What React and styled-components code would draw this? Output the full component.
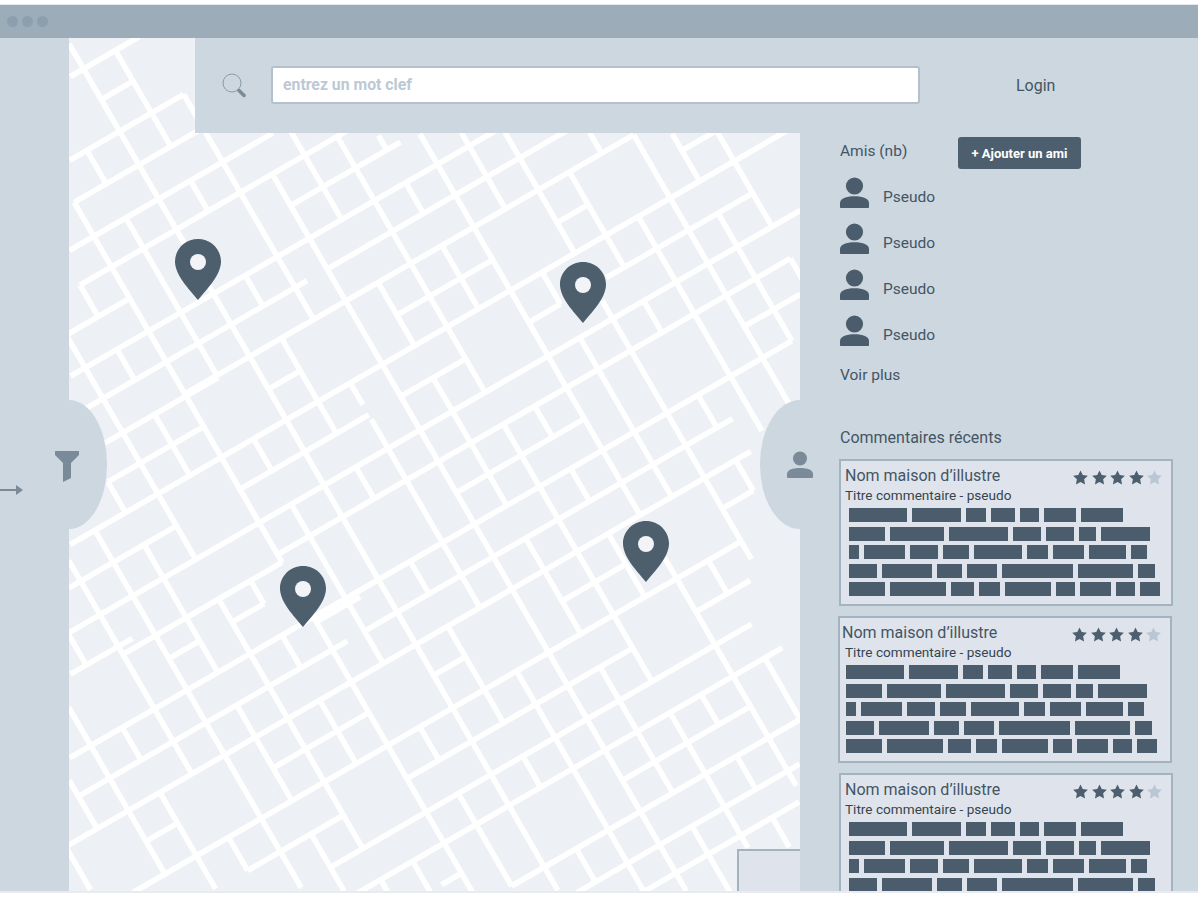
import styled, { createGlobalStyle } from "styled-components";

const GlobalStyle = createGlobalStyle`
  html, body {
    margin: 0;
    background: #fff;
    font-family: Roboto, "Liberation Sans", sans-serif;
    overflow: hidden;
  }
`;

const slate = "#4b5d6c";
const ink = "#445564";
const muted = "#7a8a99";
const panel = "#cdd7e0";
const cardBg = "#dfe4ec";
const cardLine = "#a3b3c0";

// streets traced from 3x crops: each group has the crop origin, then x1,y1,x2,y2 runs
const STREETS = [
  { x: 0, y: 0, s: [
    [208,225,420,115],[305,298,388,250],[208,480,585,265],[225,605,590,395],[208,750,820,400],[208,870,1200,305],
    [620,890,1200,565],[875,612,1200,425],[945,720,1110,625],[980,795,1200,665],[1040,880,1200,790],
    [210,130,649,897],[345,160,520,430],[265,465,320,540],[555,300,900,880],[865,400,1030,650],[810,530,1040,900],
    [1010,420,1200,750],[1130,410,1150,440],[570,540,620,620],[375,650,430,730],[430,750,530,900],[208,590,410,940],[230,870,250,900],
  ]},
  { x: 60, y: 280, s: [
    [30,165,205,60],[30,285,520,0],[130,355,740,0],[340,355,980,0],[780,355,1200,115],[625,325,715,275],[1010,100,1200,0],[1030,350,1200,250],
    [30,170,130,350],[60,25,110,100],[175,0,370,330],[170,215,220,295],[300,0,470,280],[460,50,650,380],[555,0,610,70],
    [690,0,760,110],[815,0,1030,350],[665,190,780,360],[955,20,1060,195],[1070,0,1200,180],[1120,310,1160,360],[870,320,890,360],
  ]},
  { x: 0, y: 380, s: [
    [255,80,400,5],[315,190,640,0],[335,300,600,145],[208,490,1080,-10],[208,625,510,440],[730,325,1080,120],[208,760,1080,255],
    [400,810,850,540],[835,505,1080,370],[760,810,1080,625],[960,720,1080,650],[700,710,800,655],
    [270,0,585,525],[208,540,355,790],[265,420,520,810],[340,305,380,385],[460,105,570,280],[525,0,860,570],[765,190,820,260],
    [790,0,1080,490],[435,510,600,800],[640,640,750,810],[740,590,795,655],[875,380,1080,740],[905,0,1005,145],[1040,30,1080,80],[950,710,1000,810],
  ]},
  { x: 60, y: 640, s: [
    [30,100,220,0],[30,355,650,0],[330,55,420,0],[50,470,860,0],[30,620,1090,10],[650,380,900,225],[415,630,1200,190],[1130,95,1200,55],
    [215,750,400,650],[425,655,495,610],[520,595,600,550],[575,690,835,525],[825,690,1200,450],[880,750,1200,570],[1055,410,1200,320],[270,600,350,555],[815,655,890,615],
    [30,0,70,60],[170,30,395,385],[285,0,720,745],[420,10,475,95],[570,60,905,605],[665,0,720,75],[820,40,1200,680],[920,0,970,65],
    [1060,20,1200,260],[775,185,890,360],[185,270,245,350],[530,200,700,475],[30,200,320,720],[30,420,105,560],[300,465,470,745],
    [500,600,560,690],[750,585,860,750],[1080,275,1140,345],[30,640,90,750],[960,720,990,750],[1070,670,1120,750],
  ]},
  { x: 400, y: 130, s: [
    [0,155,280,10],[0,295,510,10],[0,425,730,0],[0,555,265,395],[0,685,800,205],[800,205,1180,10],[620,445,1050,195],[470,270,555,225],[860,55,950,10],
    [395,580,470,530],[640,555,1200,240],[60,900,620,580],[255,905,1200,375],[5,790,180,690],[805,835,1200,610],[710,895,810,830],[985,735,1090,680],[1040,600,1200,490],
    [55,15,580,900],[180,10,315,235],[310,10,525,360],[510,140,680,405],[20,170,70,240],[130,360,235,530],[0,340,250,775],[700,20,1170,820],[715,280,1090,900],
    [820,10,900,145],[950,10,1115,275],[965,260,1170,630],[1015,365,1110,530],[830,475,880,560],[790,365,880,530],[475,275,530,360],[565,10,605,60],[425,440,480,530],
    [610,510,810,850],[535,630,710,900],[395,835,450,900],[725,520,790,590],[100,760,160,830],[0,800,55,890],[890,810,940,880],[1005,760,1060,830],[1170,400,1200,450],[0,590,40,640],
  ]},
  { x: 350, y: 420, s: [
    [0,150,270,0],[0,285,500,0],[0,525,940,0],[325,215,700,0],[40,635,1150,0],[100,720,1200,90],[640,545,820,440],[600,700,1200,365],
    [1040,570,1200,480],[1100,655,1200,605],[1125,260,1200,215],[760,720,830,680],
    [60,0,385,550],[190,0,600,700],[315,0,470,245],[460,25,880,720],[570,0,600,40],[700,0,870,280],[830,0,970,215],[955,0,1200,420],
    [665,165,715,235],[20,150,65,225],[530,370,695,630],[0,320,230,720],[180,440,235,510],[780,350,885,515],[945,410,1110,720],
    [345,480,390,560],[0,560,100,720],[140,590,200,680],[295,630,350,720],[1080,430,1130,510],[730,510,790,575],[1160,130,1200,200],
  ]},
  { x: 440, y: 650, s: [
    [0,75,60,35],[0,190,340,0],[0,330,570,10],[190,205,270,160],[0,460,810,0],[20,575,1030,0],[555,390,920,175],[220,700,1080,210],[410,725,1080,345],
    [610,720,1080,460],[0,695,60,665],[1000,280,1080,220],
    [60,0,190,205],[0,95,40,170],[40,190,355,720],[235,80,620,720],[330,20,740,720],[480,60,700,420],[580,0,630,75],[825,0,1050,350],[690,200,930,590],
    [975,30,1080,210],[785,140,835,215],[245,320,300,395],[50,430,110,510],[15,580,110,720],[105,535,220,700],[410,615,465,690],[750,535,810,610],[820,630,880,720],
    [670,590,745,720],[895,330,950,410],[1000,520,1050,590],[1060,370,1080,400],
  ]},
];

// the street grid is turned by 30deg: put every trace on its axis, join the ones that are the same street
const COS = Math.cos(Math.PI / 6);
const SIN = 0.5;
const toU = (x, y) => x * COS - y * SIN;
const toV = (x, y) => x * SIN + y * COS;

function cluster(segs) {
  const sorted = [...segs].sort((p, q) => p.c - q.c);
  const groups = [];
  sorted.forEach((seg) => {
    const last = groups[groups.length - 1];
    if (last && seg.c - last[0].c < 8) last.push(seg);
    else groups.push([seg]);
  });
  return groups.flatMap((group) => {
    const total = group.reduce((n, g) => n + (g.b - g.a), 0);
    const c = group.reduce((n, g) => n + g.c * (g.b - g.a), 0) / total;
    const runs = [];
    [...group].sort((p, q) => p.a - q.a).forEach((g) => {
      const run = runs[runs.length - 1];
      if (run && g.a - run.b < 10) run.b = Math.max(run.b, g.b);
      else runs.push({ c, a: g.a, b: g.b });
    });
    return runs;
  });
}

function snapEnds(segs, cross) {
  const nearest = (seg, end) => {
    let best = end;
    let gap = 13;
    cross.forEach((o) => {
      if (seg.c < o.a - 8 || seg.c > o.b + 8) return;
      const d = Math.abs(o.c - end);
      if (d < gap) {
        gap = d;
        best = o.c;
      }
    });
    return best;
  };
  return segs.map((seg) => ({ ...seg, a: nearest(seg, seg.a), b: nearest(seg, seg.b) }));
}

function buildStreets() {
  const ne = [];
  const se = [];
  STREETS.forEach((tile) => tile.s.forEach(([a, b, c, d]) => {
    const x1 = tile.x + a / 3;
    const y1 = tile.y + b / 3;
    const x2 = tile.x + c / 3;
    const y2 = tile.y + d / 3;
    const u = [toU(x1, y1), toU(x2, y2)];
    const v = [toV(x1, y1), toV(x2, y2)];
    if ((x2 - x1) * (y2 - y1) < 0) {
      ne.push({ c: (v[0] + v[1]) / 2, a: Math.min(...u), b: Math.max(...u) });
    } else {
      se.push({ c: (u[0] + u[1]) / 2, a: Math.min(...v), b: Math.max(...v) });
    }
  }));
  const across = cluster(ne);
  const down = cluster(se);
  return { across: snapEnds(across, down), down: snapEnds(down, across) };
}

const GRID = buildStreets();

const PINS = [
  { id: "a", x: 198, y: 239 },
  { id: "b", x: 583, y: 262 },
  { id: "c", x: 646, y: 521 },
  { id: "d", x: 303, y: 566 },
];

const COMMENT_ROWS = [
  [58, 49, 20, 24, 19, 32, 42],
  [36, 54, 59, 28, 28, 17, 49],
  [10, 41, 28, 26, 48, 21, 31, 37, 16],
  [28, 50, 25, 30, 71, 55, 17],
  [36, 56, 23, 21, 46, 19, 31, 19, 20],
];

const Page = styled.div`
  height: 900px;
  padding-top: 4px;
  box-sizing: border-box;
`;

const Browser = styled.div`
  width: 1198px;
  height: 889px;
  border-top: 1px solid #e4e8ec;
  border-bottom: 2px solid #e8ecf0;
  box-sizing: border-box;
  display: flex;
  flex-direction: column;
  overflow: hidden;
`;

const TitleBar = styled.div`
  height: 33px;
  flex: none;
  background: #9cacb9;
  display: flex;
  align-items: center;
  gap: 4px;
  padding: 0 0 0 7px;
`;

const Dot = styled.span`
  width: 11px;
  height: 11px;
  border-radius: 50%;
  background: #8d9eae;
`;

const Body = styled.div`
  position: relative;
  flex: 1;
  min-height: 0;
  display: grid;
  grid-template-columns: 69px 126px 605px 398px;
  grid-template-rows: 95px 1fr;
  background: ${panel};
`;

const Rail = styled.aside`
  grid-column: 1;
  grid-row: 1 / 3;
  background: ${panel};
  position: relative;
  z-index: 2;
`;

const RailArrow = styled.svg`
  position: absolute;
  left: 0;
  top: 445px;
`;

const Bulge = styled.div`
  position: absolute;
  top: 362px;
  width: 38px;
  height: 129px;
  background: ${panel};
  ${(p) => (p.$side === "left"
    ? "left: 69px; border-radius: 0 38px 38px 0 / 0 64px 64px 0;"
    : "right: 398px; width: 40px; border-radius: 40px 0 0 40px / 64px 0 0 64px;")}
  z-index: 3;
`;

const BulgeIcon = styled.svg`
  display: block;
  overflow: visible;
`;

const MapArea = styled.main`
  grid-column: 2 / 4;
  grid-row: 1 / 3;
  position: relative;
  overflow: hidden;
  background: #edf0f5;
`;

const MapStreets = styled.svg`
  display: block;
  position: absolute;
  left: 0;
  top: 0;
`;

const Pin = styled.svg`
  position: absolute;
  left: ${(p) => p.$x - 69 - 23}px;
  top: ${(p) => p.$y - 38}px;
`;

const CornerBox = styled.div`
  position: absolute;
  right: 0;
  bottom: 0;
  width: 61px;
  height: 40px;
  background: ${cardBg};
  border-top: 2px solid ${cardLine};
  border-left: 2px solid ${cardLine};
`;

const Header = styled.header`
  grid-column: 3 / 5;
  grid-row: 1;
  z-index: 2;
  background: ${panel};
  display: flex;
  align-items: center;
  padding: 0 0 0 27px;
`;

const SearchIcon = styled.svg`
  flex: none;
  margin-right: 25px;
  margin-top: -1px;
`;

const SearchInput = styled.div`
  width: 649px;
  height: 38px;
  box-sizing: border-box;
  background: #fff;
  border: 2px solid #b4c1cd;
  border-radius: 3px;
  display: flex;
  align-items: center;
  padding-left: 10px;
  margin-top: -2px;
  font-size: 15.8px;
  font-weight: 700;
  color: #bcc9d5;
`;

const Login = styled.div`
  margin-left: 96px;
  font-size: 16px;
  color: ${ink};
`;

const SidePanel = styled.section`
  grid-column: 4;
  grid-row: 2;
  z-index: 2;
  background: ${panel};
  padding: 4px 25px 0 40px;
  color: ${ink};
  overflow: hidden;
  min-height: 0;
`;

const FriendsHead = styled.div`
  display: flex;
  align-items: center;
  height: 32px;
  font-size: 15.5px;
  margin-bottom: 8px;
`;

const HeadLabel = styled.span`
  width: 118px;
  margin-top: -4px;
`;

const AddButton = styled.button`
  width: 123px;
  height: 32px;
  border: 0;
  border-radius: 3px;
  background: #4d5f6e;
  color: #fff;
  font: 700 13px Roboto, sans-serif;
  padding: 0;
`;

const FriendRow = styled.div`
  display: flex;
  align-items: center;
  gap: 14px;
  height: 31px;
  margin-bottom: 15px;
  font-size: 15.5px;
`;

const FriendName = styled.span`
  padding-top: 9px;
`;

const Link = styled.div`
  font-size: 15.5px;
  line-height: 20px;
  margin-top: 19px;
`;

const SectionTitle = styled.div`
  font-size: 16px;
  line-height: 20px;
  margin: 43px 0 11px;
`;

const Card = styled.article`
  position: relative;
  width: 334px;
  height: 147px;
  box-sizing: border-box;
  margin: 0 0 10px ${(p) => (p.$alt ? "-2px" : "-1px")};
  background: ${cardBg};
  border: 2px solid ${cardLine};
  padding: 5px 0 0 ${(p) => (p.$alt ? 2 : 4)}px;
`;

const CardTitle = styled.div`
  font-size: 16px;
  line-height: 20px;
`;

const Stars = styled.div`
  position: absolute;
  top: 9px;
  right: 9px;
  display: flex;
  gap: 3.4px;
`;

const CardSub = styled.div`
  font-size: 13.6px;
  line-height: 18px;
  color: #35454f;
  padding-left: ${(p) => (p.$alt ? 3 : 0)}px;
`;

const Lines = styled.div`
  display: flex;
  flex-direction: column;
  gap: 4.5px;
  margin-top: 4px;
  padding-left: 4px;
`;

const WordRow = styled.div`
  display: flex;
  gap: 5px;
`;

const Word = styled.span`
  width: ${(p) => p.$w}px;
  height: 14px;
  flex: none;
  background: ${slate};
`;

function Person({ size = 29, color = slate }) {
  return (
    <svg width={size} height={size * 31 / 29} viewBox="0 0 29 31" fill={color}>
      <circle cx="14.5" cy="9" r="8.6" />
      <path d="M1 31c-.6 0-1-.4-1-1v-4c0-4.600 6-6.800 14.500-6.800S29 21.400 29 26v4c0 .6-.4 1-1 1z" />
    </svg>
  );
}

function Star({ on }) {
  return (
    <svg width="15" height="15" viewBox="0 0 24 24" fill={on ? "#4d5f6e" : "#b9c6d3"}>
      <path d="M12 .6l3.600 7.500 8.200 1.100-6 5.700 1.500 8.200-7.300-4-7.300 4 1.500-8.200-6-5.700 8.200-1.100z" />
    </svg>
  );
}

function Comment({ alt }) {
  return (
    <Card $alt={alt}>
      <CardTitle>Nom maison d’illustre</CardTitle>
      <Stars>
        {[1, 2, 3, 4, 5].map((n) => <Star key={n} on={n < 5} />)}
      </Stars>
      <CardSub $alt={alt}>Titre commentaire - pseudo</CardSub>
      <Lines>
        {COMMENT_ROWS.map((row, i) => (
          <WordRow key={i}>
            {row.map((w, j) => <Word key={j} $w={w} />)}
          </WordRow>
        ))}
      </Lines>
    </Card>
  );
}

export default function App() {
  return (
    <Page>
      <GlobalStyle />
      <Browser>
        <TitleBar>
          <Dot />
          <Dot />
          <Dot />
        </TitleBar>
        <Body>
          <Rail>
            <RailArrow width="24" height="14" viewBox="0 0 24 14">
              <path d="M0 7h17" stroke={muted} strokeWidth="2" />
              <path d="M16 2l7 5-7 5z" fill={muted} />
            </RailArrow>
          </Rail>
          <Bulge $side="left">
            <BulgeIcon width="38" height="129" viewBox="0 0 38 129">
              <path d="M-14 51h24v4l-8 8v15l-8 4V63l-8-8z" fill={muted} />
            </BulgeIcon>
          </Bulge>
          <MapArea>
            <MapStreets width="731" height="853" viewBox="69 38 731 853">
              <g transform="rotate(-30)" stroke="#fff" strokeWidth="5.5">
                {GRID.across.map((l, i) => <line key={"a" + i} x1={l.a} x2={l.b} y1={l.c} y2={l.c} />)}
                {GRID.down.map((l, i) => <line key={"d" + i} x1={l.c} x2={l.c} y1={l.a} y2={l.b} />)}
              </g>
            </MapStreets>
            {PINS.map((pin) => (
              <Pin key={pin.id} $x={pin.x} $y={pin.y} width="46" height="61" viewBox="0 0 46 61">
                <path d="M23 0C10.300 0 0 10 0 22.500 0 36 14 50 23 61c9-11 23-25 23-38.500C46 10 35.700 0 23 0z" fill="#4d5f6d" />
                <circle cx="23" cy="23" r="8" fill="#f2f4f7" />
              </Pin>
            ))}
            <CornerBox />
          </MapArea>
          <Header>
            <SearchIcon width="24" height="25" viewBox="0 0 24 25" fill="none">
              <circle cx="10" cy="10" r="9" stroke="#8b9aa8" strokeWidth="1" />
              <path d="M17 17.500l5 5" stroke={muted} strokeWidth="3.500" strokeLinecap="round" />
            </SearchIcon>
            <SearchInput>entrez un mot clef</SearchInput>
            <Login>Login</Login>
          </Header>
          <SidePanel>
            <FriendsHead>
              <HeadLabel>Amis (nb)</HeadLabel>
              <AddButton>+ Ajouter un ami</AddButton>
            </FriendsHead>
            {[1, 2, 3, 4].map((n) => (
              <FriendRow key={n}>
                <Person />
                <FriendName>Pseudo</FriendName>
              </FriendRow>
            ))}
            <Link>Voir plus</Link>
            <SectionTitle>Commentaires récents</SectionTitle>
            <Comment />
            <Comment alt />
            <Comment />
          </SidePanel>
          <Bulge $side="right">
            <BulgeIcon width="40" height="129" viewBox="0 0 40 129">
              <g transform="translate(27 51)">
                <circle cx="13" cy="7.500" r="7" fill={muted} />
                <path d="M1 27c-.6 0-1-.4-1-1v-3c0-4 5.500-6 13-6s13 2 13 6v3c0 .6-.4 1-1 1z" fill={muted} />
              </g>
            </BulgeIcon>
          </Bulge>
        </Body>
      </Browser>
    </Page>
  );
}
